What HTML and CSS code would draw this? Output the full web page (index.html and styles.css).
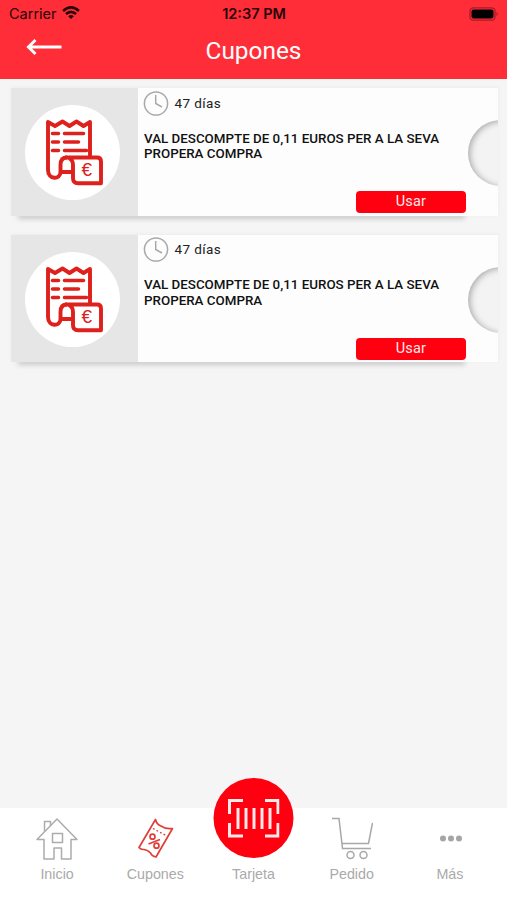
FILE: index.html
```html
<!DOCTYPE html>
<html lang="es">
<head>
<meta charset="utf-8">
<title>Cupones</title>
<link rel="stylesheet" href="styles.css">
</head>
<body>
<svg class="defs" width="0" height="0" aria-hidden="true">
  <symbol id="receipt" viewBox="0 0 58 67">
    <g fill="none" stroke="#de211c" stroke-width="3.900" stroke-linejoin="round">
      <path d="M45 38V3L38.500 7L31.500 2.500L24.500 7L17.500 2.500L10 7L3 3V51C3 61 15.500 61 15.500 53V46Q15.500 38.500 22 38.500"/>
      <path d="M20 38.500H52Q56 38.500 56 42.500V64.300H33Q28 64.300 28 59.300V46Q28 41 24 39M15.500 53H28"/>
      <path d="M7.500 14.500h6M19.500 14.500h19M7.500 23h6M19.500 23h14M7.500 31.500h6M19.500 31.500h22" stroke-linecap="round" stroke-width="3.600"/>
    </g>
  </symbol>
  <symbol id="clock" viewBox="0 0 26 26">
    <g fill="none" stroke="#a9a9a9" stroke-width="1.500"><circle cx="13" cy="12.500" r="11.600"/><path d="M12.700 4V12.500L19 16"/></g>
  </symbol>
</svg>
<div class="screen">
  <header class="header">
    <div class="status">
      <div class="carrier"><span>Carrier</span>
        <svg class="wifi" width="18" height="14" viewBox="0 0 19 15"><g fill="none" stroke="#260609" stroke-width="2.800"><path d="M1 5.300Q9.500 -2.200 18 5.300"/><path d="M4.100 8.600Q9.500 3.900 14.900 8.600"/></g><path d="M6.500 10.900Q9.500 8.400 12.500 10.900L9.500 14Z" fill="#260609"/></svg>
      </div>
      <span class="time">12:37 PM</span>
      <svg class="battery" width="31" height="14" viewBox="0 0 31 14"><rect x="2" y=".8" width="25" height="12.400" rx="3.500" fill="none" stroke="#a91c26" stroke-width="1.300"/><rect x="3.500" y="2.500" width="22" height="9" rx="2" fill="#000"/><path d="M28.500 4.800Q31 7 28.500 9.200Z" fill="#a91c26"/></svg>
    </div>
    <div class="bar">
      <svg class="back" width="37" height="18" viewBox="0 0 37 18"><path d="M35.500 9H3M9.500 2L2.500 9L9.500 16" fill="none" stroke="#fff" stroke-width="3"/></svg>
      <h1>Cupones</h1>
    </div>
  </header>
  <main class="list">
    <article class="coupon">
      <div class="thumb"><div class="disc"><svg width="58" height="67"><use href="#receipt"/></svg><span class="euro">€</span></div></div>
      <div class="info">
        <div class="expiry"><svg width="26" height="26"><use href="#clock"/></svg><span>47 días</span></div>
        <p>VAL DESCOMPTE DE 0,11 EUROS PER A LA SEVA<br>PROPERA COMPRA</p>
        <button>Usar</button>
      </div>
      <div class="notch"></div>
    </article>
    <article class="coupon">
      <div class="thumb"><div class="disc"><svg width="58" height="67"><use href="#receipt"/></svg><span class="euro">€</span></div></div>
      <div class="info">
        <div class="expiry"><svg width="26" height="26"><use href="#clock"/></svg><span>47 días</span></div>
        <p>VAL DESCOMPTE DE 0,11 EUROS PER A LA SEVA<br>PROPERA COMPRA</p>
        <button>Usar</button>
      </div>
      <div class="notch"></div>
    </article>
  </main>
  <nav class="tabs">
    <a class="tab"><svg width="42" height="42" viewBox="0 0 42 42"><g fill="none" stroke="#acacac" stroke-width="1.500" stroke-linejoin="round"><path d="M21 1L41 21.500H35V41H25.500V30H18V41H8V21.500H1Z"/><path d="M8.500 13.500V3.500H14.500V7.500"/><rect x="16.500" y="15.500" width="10" height="9"/></g></svg><span>Inicio</span></a>
    <a class="tab"><svg width="42" height="42" viewBox="0 0 42 42"><g fill="none" stroke="#df3f38" stroke-width="1.700" stroke-linejoin="round"><path d="M21.500 1.500Q22.500 6.500 27 8Q32 11.500 38.500 10.500L22 39Q18 38.500 16.500 35Q13 31.500 9.500 31.500Q6.500 31.500 5 29.500Z"/><circle cx="18.500" cy="18.700" r="2.500"/><circle cx="22.500" cy="27.700" r="2.500"/><path d="M26 21.500L14.500 26"/><path d="M19 10.500L32 17.500" stroke-width="1.400" stroke-dasharray="1.800 2.200"/></g></svg><span>Cupones</span></a>
    <a class="tab"><span class="scan"><svg width="52" height="40" viewBox="0 0 52 40"><g fill="none" stroke="#ffe9e9" stroke-width="3"><path d="M2 16V2.500H15.500M37.500 2.500H50.500V16M50.500 25V38H37.500M15.500 38H2V25"/><path d="M10.500 10V31M18.500 10V31M26.500 10V31M34.500 10V31M42.500 10V31"/></g></svg></span><span>Tarjeta</span></a>
    <a class="tab"><svg width="42" height="43" viewBox="0 0 42 43"><g fill="none" stroke="#a8a8a8" stroke-width="1.500"><path d="M1 1.500H8L11.500 31.500H40"/><path d="M11 26.500H37.500L41.500 6"/><circle cx="19.500" cy="38" r="3.500"/><circle cx="32.500" cy="38" r="3.500"/></g></svg><span>Pedido</span></a>
    <a class="tab"><svg width="42" height="42" viewBox="0 0 42 42"><g fill="#a5a5a5"><circle cx="14" cy="20.500" r="3"/><circle cx="22" cy="20.500" r="3"/><circle cx="30" cy="20.500" r="3"/></g></svg><span>Más</span></a>
  </nav>
</div>
</body>
</html>
```
FILE: styles.css
```css
* { box-sizing: border-box; }
body { margin: 0; background: #f5f5f5; font-family: Roboto, sans-serif; }
svg { display: block; flex: none; }
.defs { position: absolute; }
.screen { height: 900px; display: flex; flex-direction: column; }
.header { height: 79px; flex: none; background: #ff2d38; color: #fff; }
.status { height: 27px; padding: 0 8px 0 9px; display: grid; grid-template-columns: 1fr auto 1fr; align-items: center; color: #260609; font: 14.5px Inter, sans-serif; }
.carrier { display: flex; align-items: center; gap: 5.5px; }
.wifi { margin-top: -2px; }
.time { font-weight: 600; }
.battery { justify-self: end; }
.bar { display: grid; grid-template-columns: 1fr auto 1fr; }
.back { margin: 11px 0 0 26px; }
h1 { margin: 9px 0 0; font-size: 24.4px; line-height: 30px; font-weight: 400; }
.list { flex: 1; padding: 9px 9px 0 11px; display: flex; flex-direction: column; gap: 19px; }
.coupon { height: 127.5px; display: flex; position: relative; background: #fdfdfd; box-shadow: 0 -1px 3px #ececec; }
.coupon::before { content: ""; position: absolute; z-index: -1; left: 8px; right: 34px; bottom: 0; height: 10px; box-shadow: 0 2px 5px 1px #cacaca; }
.thumb { width: 127px; background: #e6e6e6; padding: 17px 0 0 14px; }
.disc { width: 95px; height: 95px; border-radius: 50%; background: #fff; padding: 14px 0 0 20px; position: relative; }
.euro { position: absolute; left: 56.5px; top: 53px; color: #de211c; font: 19px/24px "Liberation Sans", sans-serif; }
.info { width: 330px; display: flex; flex-direction: column; padding: 3px 2px 0 5px; }
.expiry { display: flex; align-items: center; gap: 5.5px; height: 25px; font-size: 13.5px; letter-spacing: .4px; color: #222; }
.expiry span { margin-top: -1.500px; }
p { margin: 14.500px 0 0 1px; font-size: 13.36px; line-height: 15.5px; font-weight: 500; color: #111; white-space: nowrap; }
button { width: 110px; height: 22px; margin: 29.500px 0 0; align-self: flex-end; border: 0; border-radius: 4px; background: #ff0011; color: #ffe8e8; font: 14.5px/22px Roboto, sans-serif; letter-spacing: .2px; padding: 0; }
.notch { flex: 1; margin-top: 32px; height: 66px; overflow: hidden; position: relative; }
.notch::before { content: ""; position: absolute; left: 0; width: 66px; height: 66px; border-radius: 50%; background: #f3f3f3; box-shadow: inset 2px 1px 6px #aaa; }
.tabs { height: 92px; flex: none; background: #fff; padding: 0 8px; display: grid; grid-template-columns: repeat(5, 1fr); color: #aaa; font: 14.3px/18px "Liberation Sans", sans-serif; }
.tab { height: 75px; display: flex; flex-direction: column; align-items: center; justify-content: flex-end; gap: 5px; }
.scan { width: 80px; height: 80px; border-radius: 50%; background: #ff0011; display: flex; align-items: center; justify-content: center; flex: none; margin-bottom: 2.5px; transform: translateX(.5px); }
```
